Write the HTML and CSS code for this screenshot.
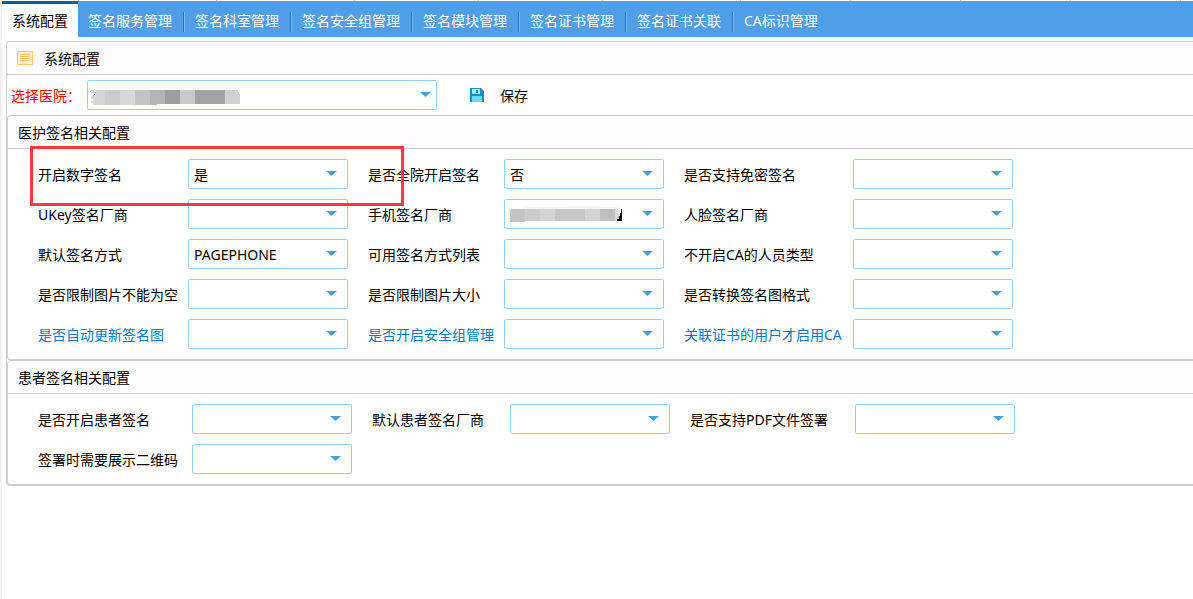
FILE: index.html
```
<!DOCTYPE html>
<html lang="zh-CN">
<head>
<meta charset="utf-8">
<title>系统配置</title>
<link rel="stylesheet" href="styles.css">
</head>
<body>
<div class="strip"><i class="first"></i><i class="long"></i><i class="long"></i><i class="mid"></i><i class="mid"></i><i class="long"></i><i></i><i></i><i></i><i></i></div>
<nav class="tabs">
  <button class="tab active" type="button">系统配置</button>
  <button class="tab" type="button">签名服务管理</button>
  <button class="tab" type="button">签名科室管理</button>
  <button class="tab" type="button">签名安全组管理</button>
  <button class="tab" type="button">签名模块管理</button>
  <button class="tab" type="button">签名证书管理</button>
  <button class="tab" type="button">签名证书关联</button>
  <button class="tab" type="button">CA标识管理</button>
</nav>
<main class="panel">
  <h1 class="panel-head">
    <svg width="16" height="14" viewBox="0 0 16 14" shape-rendering="crispEdges"><path fill="#ffc967" d="M0 0h16v14H0z"/><path fill="#ffedcc" d="M1 1h14v12H1z"/><path fill="#ffc967" d="M3 3h10v1H3zM3 5h10v1H3zM3 7h10v1H3zM3 9h10v1H3z"/></svg>
    <span>系统配置</span>
  </h1>
  <div class="toolbar">
    <label class="required" for="hospital">选择医院：</label>
    <span class="combo wide">
      <select id="hospital"><option></option></select>
      <svg class="mosaic" width="152" height="17" viewBox="0 0 152 17" shape-rendering="crispEdges"><path fill="#d5d5d5" d="M0 1h15v15H3v-2H1v-2h2v-2H1V8h1V6h2V4H0z"/><path fill="#cbcbcb" d="M15 1h15v15H15z"/><path fill="#d7d7d7" d="M30 1h15v15H30z"/><path fill="#c3c3c3" d="M45 1h15v15H45z"/><path fill="#b4b4b4" d="M60 1h15v14h-8v1h-7z"/><path fill="#9d9d9d" d="M75 1h15v14H75z"/><path fill="#c8c8c8" d="M90 1h15v14H90z"/><path fill="#a3a3a3" d="M105 1h30v14h-30z"/><path fill="#d0d0d0" d="M135 1h13v2h1v2h1v10h-15z"/><path fill="#000" d="M4 5h1v1H4z"/></svg>
    </span>
    <button class="save" type="button">
      <svg width="14" height="14" viewBox="0 0 14 14"><path fill="#1a8fb8" d="M0 0h11l3 3v11H0z"/><path fill="#b0effc" d="M2 1h8v5H2z"/><path fill="#1a8fb8" d="M6 2h2v3H6z"/><path fill="#66dcff" d="M2 8h10v6H2z"/></svg>
      <span>保存</span>
    </button>
  </div>
  <section class="group">
    <h2 class="group-head">医护签名相关配置</h2>
    <div class="fields staff">
      <label for="a1">开启数字签名</label><span class="combo"><select id="a1"><option>是</option></select></span>
      <label for="a2">是否全院开启签名</label><span class="combo"><select id="a2"><option>否</option></select></span>
      <label for="a3">是否支持免密签名</label><span class="combo"><select id="a3"><option></option></select></span>
      <label for="b1">UKey签名厂商</label><span class="combo"><select id="b1"><option></option></select></span>
      <label for="b2">手机签名厂商</label><span class="combo"><select id="b2"><option></option></select>
        <svg class="mosaic small" width="116" height="17" viewBox="0 0 116 17" shape-rendering="crispEdges"><path fill="#f3f5f7" d="M0 3h3V2h12V1h46V0h30v1h20v14H0z"/><path fill="#c3c3c3" d="M2 4h1V3h14v13H2z"/><path fill="#cbcbcb" d="M17 3h15v12H17z"/><path fill="#d3d3d3" d="M32 3h15v12H32z"/><path fill="#c7c7c7" d="M47 3h30v12H47z"/><path fill="#d3d3d3" d="M77 3h15v12H77z"/><path fill="#bfbfbf" d="M92 3h15v12H92z"/><path fill="#d8d8d8" d="M107 3h4v9h-1v3h-3z"/><path fill="#000" d="M113 3h1v12h-5v-2h2v-3h1V7h1z"/></svg></span>
      <label for="b3">人脸签名厂商</label><span class="combo"><select id="b3"><option></option></select></span>
      <label for="c1">默认签名方式</label><span class="combo"><select id="c1"><option>PAGEPHONE</option></select></span>
      <label for="c2">可用签名方式列表</label><span class="combo"><select id="c2"><option></option></select></span>
      <label for="c3">不开启CA的人员类型</label><span class="combo"><select id="c3"><option></option></select></span>
      <label for="d1">是否限制图片不能为空</label><span class="combo"><select id="d1"><option></option></select></span>
      <label for="d2">是否限制图片大小</label><span class="combo"><select id="d2"><option></option></select></span>
      <label for="d3">是否转换签名图格式</label><span class="combo"><select id="d3"><option></option></select></span>
      <label class="tip" for="e1">是否自动更新签名图</label><span class="combo"><select id="e1"><option></option></select></span>
      <label class="tip" for="e2">是否开启安全组管理</label><span class="combo"><select id="e2"><option></option></select></span>
      <label class="tip" for="e3">关联证书的用户才启用CA</label><span class="combo"><select id="e3"><option></option></select></span>
    </div>
    <div class="highlight"></div>
  </section>
  <section class="group">
    <h2 class="group-head">患者签名相关配置</h2>
    <div class="fields patient">
      <label for="f1">是否开启患者签名</label><span class="combo"><select id="f1"><option></option></select></span>
      <label for="f2">默认患者签名厂商</label><span class="combo"><select id="f2"><option></option></select></span>
      <label for="f3">是否支持PDF文件签署</label><span class="combo"><select id="f3"><option></option></select></span>
      <label for="g1">签署时需要展示二维码</label><span class="combo"><select id="g1"><option></option></select></span>
    </div>
  </section>
</main>
</body>
</html>
```
FILE: styles.css
```
* { box-sizing: border-box; }
body {
  margin: 0;
  min-height: 100vh;
  border-left: 2px solid #f0f0f0;
  background: #fff;
  color: #000;
  font: 14px/20px "Noto Sans", "Noto Sans CJK SC", sans-serif;
}
button, select { font: inherit; color: inherit; }
h1, h2 { margin: 0; font-size: 14px; font-weight: 400; }

.strip { display: flex; height: 1px; overflow: hidden; }
.strip i { flex: none; width: 110px; border-right: 1px solid #ccc; }
.strip .first { width: 77px; }
.strip .long { width: 138px; }
.strip .mid { width: 124px; }

.tabs { display: flex; height: 36px; background: #509de8; }
.tab {
  position: relative;
  flex: none;
  padding: 4px 13px 0 10px;
  border: 0;
  background: none;
  color: #fff;
  white-space: nowrap;
}
.tab:not(.active):not(:last-child)::after {
  content: "";
  position: absolute;
  right: 0;
  top: 11px;
  width: 2px;
  height: 20px;
  background: linear-gradient(90deg, #1f72bd 50%, #7cbcf5 50%);
}
.tab.active {
  padding: 1px 10px 0;
  border-top: 3px solid #0063a7;
  background: #fff;
  color: #000;
}

.panel {
  margin: 4px 0 0 4px;
  border: 1px solid #ccc;
  border-right: 0;
  border-bottom: 0;
  border-radius: 4px 0 0 4px;
}
.panel-head {
  display: flex;
  align-items: center;
  gap: 11px;
  height: 33px;
  padding-left: 10px;
  border-bottom: 1px solid #ccc;
  border-radius: 4px 0 0 0;
  background: #fffbff;
}
.panel-head span, .save span, .required, .fields label { padding-top: 2px; }
.toolbar { display: flex; align-items: center; height: 40px; padding-left: 4px; }
.required { width: 76px; color: #f00; white-space: nowrap; }
.save {
  display: flex;
  align-items: center;
  gap: 16px;
  margin-left: 33px;
  padding: 0;
  border: 0;
  background: none;
}

.combo { position: relative; display: block; height: 30px; }
.combo.wide { width: 350px; }
.combo select {
  display: block;
  width: 100%;
  height: 30px;
  padding: 1px 30px 0 5px;
  border: 1px solid #95d0f5;
  border-radius: 2px;
  background: #fff;
  appearance: none;
}
.combo::after {
  content: "";
  position: absolute;
  right: 11px;
  top: 12px;
  width: 11px;
  height: 5px;
  background: #3fa1de;
  clip-path: polygon(0 0, 100% 0, 50% 100%);
  pointer-events: none;
}
.combo.wide::after { right: 6px; }
.mosaic { position: absolute; left: 3px; top: 9px; pointer-events: none; }
.mosaic.small { left: 4px; top: 7px; }

.group {
  position: relative;
  border: 1px solid #ccc;
  border-right: 0;
  border-bottom: 2px solid #ccc;
  border-radius: 4px 0 0 4px;
}
.group + .group { border-top: 0; }
.group-head {
  display: flex;
  align-items: center;
  height: 33px;
  padding: 2px 0 0 10px;
  border-bottom: 1px solid #ccc;
  border-radius: 4px 0 0 0;
  background: #fffbff;
}
.fields { display: grid; row-gap: 10px; align-items: center; padding: 10px 0 10px 10px; }
.fields label { padding-left: 20px; white-space: nowrap; }
.staff { grid-template-columns: 170px 160px 156px 160px 189px 160px; }
.patient { grid-template-columns: 174px 160px 158px 160px 185px 160px; }
.tip { color: #0079d0; }
.highlight {
  position: absolute;
  left: 22px;
  top: 30px;
  width: 374px;
  height: 60px;
  border: 3px solid #fc3838;
  pointer-events: none;
}
```
